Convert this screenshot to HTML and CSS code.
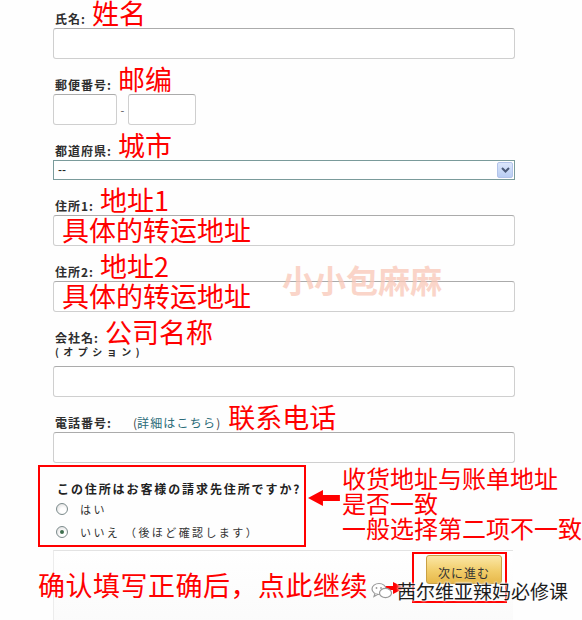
FILE: index.html
```html
<html>
<head>
    <title>お届け先住所</title>
    <link rel="stylesheet" href="styles.css">
</head>
<body>
    <div class="page">
        <div class="form">
            <div class="field">
                <div class="field-head"><span class="label">氏名:</span><span class="note">姓名</span></div>
                <input type="text" class="text-input">
            </div>

            <div class="field">
                <div class="field-head"><span class="label">郵便番号:</span><span class="note">邮编</span></div>
                <div class="zip">
                    <input type="text" class="text-input zip-a">
                    <span class="dash">-</span>
                    <input type="text" class="text-input zip-b">
                </div>
            </div>

            <div class="field">
                <div class="field-head"><span class="label">都道府県:</span><span class="note">城市</span></div>
                <div class="select">
                    <span>--</span>
                    <span class="select-btn">
                        <svg width="9" height="6" viewBox="0 0 9 6"><path d="M1 1 L4.5 4.5 L8 1" fill="none" stroke="#4b5a78" stroke-width="2"/></svg>
                    </span>
                </div>
            </div>

            <div class="field">
                <div class="field-head"><span class="label">住所1:</span><span class="note">地址1</span></div>
                <div class="input-wrap">
                    <input type="text" class="text-input">
                    <span class="note inside">具体的转运地址</span>
                </div>
            </div>

            <div class="field">
                <div class="field-head"><span class="label">住所2:</span><span class="note">地址2</span></div>
                <div class="input-wrap">
                    <input type="text" class="text-input">
                    <span class="note inside">具体的转运地址</span>
                </div>
            </div>

            <div class="field">
                <div class="field-head"><span class="label">会社名:</span><span class="note">公司名称</span></div>
                <div class="sub-label">(オプション)</div>
                <input type="text" class="text-input">
            </div>

            <div class="field">
                <div class="field-head">
                    <span class="label">電話番号:</span>
                    <span class="help">(<a href="#">詳細はこちら</a>)</span>
                    <span class="note">联系电话</span>
                </div>
                <input type="text" class="text-input">
            </div>
        </div>

        <div class="confirm-row">
            <div class="billing-box">
                <p class="question">この住所はお客様の請求先住所ですか?</p>
                <label class="choice"><span class="radio"></span>はい</label>
                <label class="choice"><span class="radio checked"></span>いいえ （後ほど確認します）</label>
            </div>
            <svg class="arrow-left" width="32" height="16" viewBox="0 0 32 16">
                <path d="M0 8 L15 0 L15 5 L32 5 L32 11 L15 11 L15 16 Z" fill="#f00"/>
            </svg>
            <div class="side-note">收货地址与账单地址<br>是否一致<br>一般选择第二项不一致</div>
        </div>

        <div class="submit-panel">
            <span class="final-note">确认填写正确后，点此继续</span>
            <svg class="arrow-right" width="30" height="12" viewBox="0 0 30 12">
                <path d="M0 4 L18 4 L18 0 L30 6 L18 12 L18 8 L0 8 Z" fill="#f00"/>
            </svg>
            <div class="btn-frame"><button class="btn-next">次に進む</button></div>
        </div>

        <div class="wm-brand">小小包麻麻</div>
        <div class="wm-account">
            <svg width="22" height="18" viewBox="0 0 22 18">
                <ellipse cx="8" cy="7" rx="7" ry="5.5" fill="#fff" stroke="#9a9a9a" stroke-width="1.2"/>
                <path d="M4 11.5 L3 14.5 L7 12.3" fill="#fff" stroke="#9a9a9a" stroke-width="1.2"/>
                <ellipse cx="14.5" cy="11" rx="6" ry="4.6" fill="#fff" stroke="#9a9a9a" stroke-width="1.2"/>
                <circle cx="5.5" cy="6" r="0.9" fill="#9a9a9a"/>
                <circle cx="10" cy="6" r="0.9" fill="#9a9a9a"/>
            </svg>
            <span>茜尔维亚辣妈必修课</span>
        </div>
    </div>
</body>
</html>
```

FILE: styles.css
```css
body {
    margin: 0;
    background: #fefefe;
    font-family: "Noto Sans CJK JP", "Liberation Sans", sans-serif;
    color: #2a2a2a;
}

.page {
    position: relative;
    width: 582px;
    height: 620px;
    overflow: hidden;
}

.form {
    margin-left: 53px;
    width: 462px;
}

.field {
    margin-bottom: 7px;
}

.field-head {
    display: flex;
    align-items: baseline;
    height: 28px;
    margin-top: -1px;
    margin-bottom: 1px;
}

.label {
    margin-left: 2px;
    margin-right: 6px;
    font-size: 12px;
    font-weight: bold;
    letter-spacing: 1px;
    color: #2e2e2e;
}

.note {
    font-family: "Noto Sans CJK SC", sans-serif;
    font-size: 27px;
    line-height: 28px;
    color: #f00;
    white-space: nowrap;
}

.help {
    margin-left: 15px;
    margin-right: 8px;
    font-size: 12px;
    color: #444;
}

.help a {
    color: #2b6b78;
    text-decoration: none;
    letter-spacing: 1.2px;
}

.text-input {
    display: block;
    box-sizing: border-box;
    width: 462px;
    height: 31px;
    margin: 0;
    border: 1px solid #cfcfcf;
    border-top-color: #ababab;
    border-radius: 3px;
    background: #fff;
}

.zip {
    display: flex;
    align-items: center;
}

.zip .zip-a {
    width: 64px;
}

.zip .zip-b {
    width: 68px;
}

.dash {
    width: 11px;
    text-align: center;
    font-size: 11px;
    color: #555;
}

.select {
    box-sizing: border-box;
    display: flex;
    justify-content: space-between;
    align-items: center;
    width: 462px;
    height: 20px;
    padding: 0 1px 0 4px;
    border: 1px solid #7a9b9b;
    background: #fff;
    font-family: "Liberation Sans", sans-serif;
    font-size: 12px;
    color: #222;
}

.select-btn {
    box-sizing: border-box;
    display: flex;
    align-items: center;
    justify-content: center;
    width: 16px;
    height: 16px;
    border: 1px solid #b3c4ea;
    border-radius: 2px;
    background: linear-gradient(#dbe6fb, #b9cdf3);
}

.input-wrap {
    position: relative;
}

.note.inside {
    position: absolute;
    left: 9px;
    top: 1px;
}

.sub-label {
    margin-left: 2px;
    margin-top: -2px;
    height: 21px;
    font-size: 10px;
    font-weight: bold;
    letter-spacing: 4.5px;
    line-height: 14px;
}

.confirm-row {
    display: flex;
    align-items: flex-start;
    margin-top: -5px;
}

.billing-box {
    box-sizing: border-box;
    width: 269px;
    height: 82px;
    margin-left: 38px;
    padding: 14px 0 0 17px;
    border: 2px solid #f00;
}

.question {
    margin: 0;
    font-size: 12px;
    font-weight: bold;
    line-height: 16px;
    letter-spacing: 1.9px;
    color: #222;
    white-space: nowrap;
}

.choice {
    display: flex;
    align-items: center;
    height: 22px;
    margin-top: 1px;
    font-size: 11px;
    letter-spacing: 2.4px;
    color: #333;
}

.radio {
    box-sizing: border-box;
    display: inline-flex;
    align-items: center;
    justify-content: center;
    width: 12px;
    height: 12px;
    margin-left: -1px;
    margin-right: 12px;
    border: 1px solid #7c8b8c;
    border-radius: 50%;
    background: radial-gradient(circle at 60% 65%, #ffffff 30%, #d6d6d6 100%);
}

.radio.checked::after {
    content: "";
    width: 4px;
    height: 4px;
    border-radius: 50%;
    background: #3f6f4f;
}

.arrow-left {
    margin-top: 25px;
    margin-left: 2px;
}

.side-note {
    margin-top: 0;
    margin-left: 2px;
    font-family: "Noto Sans CJK SC", sans-serif;
    font-size: 24px;
    line-height: 25px;
    color: #f00;
    white-space: nowrap;
}

.submit-panel {
    display: flex;
    align-items: flex-start;
    height: 80px;
    margin-top: 3px;
    margin-left: 53px;
    width: 459px;
    border-top: 1px solid #e3e3e3;
    border-left: 1px solid #ececec;
    background: linear-gradient(#ffffff, #fafafa);
}

.final-note {
    width: 337px;
    margin-left: -16px;
    margin-top: 20px;
    font-family: "Noto Sans CJK SC", sans-serif;
    font-size: 27px;
    line-height: 28px;
    letter-spacing: 0.5px;
    color: #f00;
    white-space: nowrap;
}

.arrow-right {
    margin-top: 31px;
}

.btn-frame {
    box-sizing: border-box;
    width: 95px;
    height: 51px;
    margin-top: 1px;
    margin-left: 7px;
    padding: 1px 0 0 12px;
    border: 2px solid #f00;
}

.btn-next {
    width: 76px;
    height: 29px;
    padding: 6px 0 0;
    border: 1px solid #c9a044;
    border-radius: 3px;
    background: linear-gradient(#fbe7a6, #f1cd6a 55%, #e7b84a);
    font-family: "Noto Sans CJK JP", sans-serif;
    font-size: 12px;
    letter-spacing: 1px;
    color: #333;
}

.wm-brand {
    position: absolute;
    left: 282px;
    top: 256px;
    font-family: "Noto Sans CJK SC", sans-serif;
    font-size: 32px;
    font-weight: bold;
    color: #f9c7b7;
    opacity: 0.75;
}

.wm-account {
    position: absolute;
    left: 371px;
    top: 577px;
    display: flex;
    align-items: center;
    gap: 4px;
    font-family: "Noto Sans CJK SC", sans-serif;
    font-size: 19px;
    color: #1c1c1c;
    text-shadow: 0 0 2px #fff, 0 0 2px #fff, 0 0 3px #fff;
}
```
